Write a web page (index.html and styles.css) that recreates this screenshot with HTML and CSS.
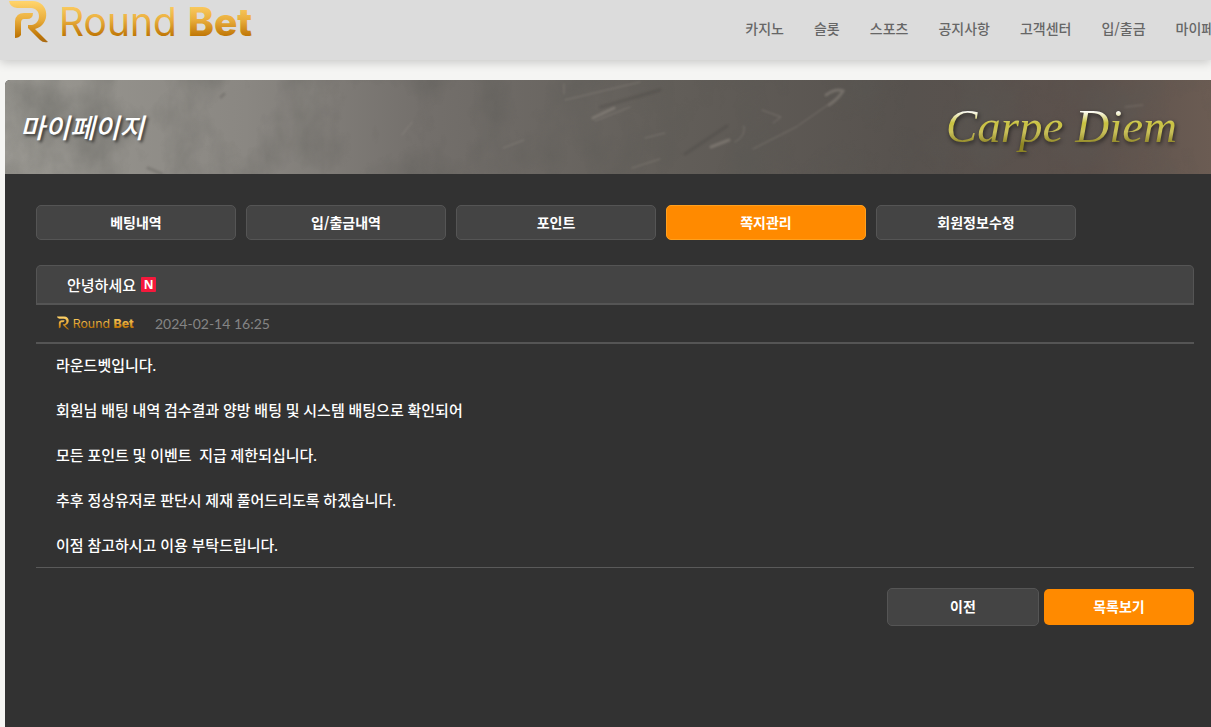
FILE: index.html
```html
<!DOCTYPE html>
<html lang="ko">
<head>
<meta charset="utf-8">
<title>Round Bet - 마이페이지</title>
<link rel="stylesheet" href="styles.css">
</head>
<body>
<svg class="defs" aria-hidden="true">
  <defs>
    <linearGradient id="gold" gradientUnits="userSpaceOnUse" x1="0" y1="2" x2="0" y2="42">
      <stop offset="0" stop-color="#ffd36a"/>
      <stop offset="0.45" stop-color="#e9ad3c"/>
      <stop offset="0.85" stop-color="#bf7606"/>
      <stop offset="1" stop-color="#a96a14"/>
    </linearGradient>
    <symbol id="logo" viewBox="0 0 250 46">
      <path fill="url(#gold)" d="M3 1 H26 C44 1 45 25 29 29 L42 42 Q37 43 34 40 L22 28 V25 H26 C36 23 35 8 25 8 H11 Q4 7 3 1 Z"/>
      <path fill="url(#gold)" d="M9 38 V21 Q10 13 18 13 H27 Q27 19 21 19 H18 Q15 19 15 23 V35 Q13 38 9 38 Z"/>
      <text class="logo-thin" x="53" y="36" fill="url(#gold)">Round</text>
      <text class="logo-bold" x="182" y="36" fill="url(#gold)">Bet</text>
    </symbol>
  </defs>
</svg>
<header class="header">
  <a class="brand" href="#" aria-label="Round Bet"><svg class="brand-logo"><use href="#logo"/></svg></a>
  <nav class="nav">
    <a href="#">카지노</a>
    <a href="#">슬롯</a>
    <a href="#">스포츠</a>
    <a href="#">공지사항</a>
    <a href="#">고객센터</a>
    <a href="#">입/출금</a>
    <a href="#">마이페이지</a>
  </nav>
</header>
<main class="page">
  <section class="banner">
    <svg class="banner-art" viewBox="0 0 1206 94" preserveAspectRatio="xMidYMid slice" aria-hidden="true">
      <defs>
        <linearGradient id="wall" x1="0" x2="1" y1="0" y2="0">
          <stop offset="0" stop-color="#9a9892"/>
          <stop offset="0.2" stop-color="#8a8782"/>
          <stop offset="0.35" stop-color="#736f6b"/>
          <stop offset="0.55" stop-color="#625e59"/>
          <stop offset="0.75" stop-color="#57524e"/>
          <stop offset="0.9" stop-color="#5c514c"/>
          <stop offset="1" stop-color="#6b5c53"/>
        </linearGradient>
        <filter id="grain" x="0" y="0" width="100%" height="100%">
          <feTurbulence type="fractalNoise" baseFrequency="0.018 0.012" numOctaves="5" seed="8"/>
          <feColorMatrix values="0 0 0 0 0.1  0 0 0 0 0.1  0 0 0 0 0.09  1.8 0 0 0 -0.75"/>
        </filter>
        <filter id="soft" x="-20%" y="-50%" width="140%" height="200%"><feGaussianBlur stdDeviation="1"/></filter>
      </defs>
      <rect width="1206" height="94" fill="url(#wall)"/>
      <rect width="1206" height="94" filter="url(#grain)" opacity="0.5"/>
      <g fill="none" stroke="#b3aaa0" stroke-linecap="round" filter="url(#soft)" opacity="0.3">
        <path stroke-width="3" d="M588 38 L609 28 M706 67 L724 60 M821 15 Q831 8 838 11 Q834 18 824 25"/>
        <path stroke-width="1" d="M498 68 L519 60 M560 20 L635 2 M590 41 L625 27 M640 58 L660 53 M627 88 L655 79 M730 62 Q741 56 739 46 M757 30 L776 37 L768 43 M748 69 L793 46 M559 4 V14 M397 55 L407 42 M794 45 L827 22 M1120 27 L1138 25"/>
      </g>
      <g fill="none" stroke="#3b3834" stroke-linecap="round" filter="url(#soft)" opacity="0.2">
        <path stroke-width="3" d="M596 27 L655 10 M680 74 L722 46 M143 88 L157 94 M216 17 L219 14"/>
      </g>
    </svg>
    <h1 class="banner-title">마이페이지</h1>
    <p class="banner-motto">Carpe Diem</p>
  </section>
  <div class="content">
    <nav class="tabs">
      <a class="tab" href="#">베팅내역</a>
      <a class="tab" href="#">입/출금내역</a>
      <a class="tab" href="#">포인트</a>
      <a class="tab tab-active" href="#" aria-current="page">쪽지관리</a>
      <a class="tab" href="#">회원정보수정</a>
    </nav>
    <article class="message">
      <h2 class="message-title">안녕하세요 <span class="badge">N</span></h2>
      <div class="message-meta">
        <svg class="meta-logo" role="img" aria-label="Round Bet"><use href="#logo"/></svg>
        <time datetime="2024-02-14T16:25">2024-02-14 16:25</time>
      </div>
      <div class="message-body">
        <p>라운드벳입니다.</p>
        <p>회원님 배팅 내역 검수결과 양방 배팅 및 시스템 배팅으로 확인되어</p>
        <p>모든 포인트 및 이벤트&nbsp; 지급 제한되십니다.</p>
        <p>추후 정상유저로 판단시 제재 풀어드리도록 하겠습니다.</p>
        <p>이점 참고하시고 이용 부탁드립니다.</p>
      </div>
    </article>
    <div class="actions">
      <button class="button button-prev" type="button">이전</button>
      <button class="button button-list" type="button">목록보기</button>
    </div>
  </div>
</main>
</body>
</html>
```
FILE: styles.css
```css
* {
  box-sizing: border-box;
}

body {
  margin: 0;
  min-height: 100vh;
  display: flex;
  flex-direction: column;
  overflow-x: hidden;
  background: #f5f5f3;
  font-family: "Noto Sans CJK KR", sans-serif;
  font-size: 14px;
}

a {
  color: inherit;
  text-decoration: none;
}

h1, h2, p {
  margin: 0;
}

.defs {
  position: absolute;
  width: 0;
  height: 0;
}

.header {
  display: flex;
  justify-content: space-between;
  height: 60px;
  padding-left: 6px;
  overflow: hidden;
  background: #dcdcdc;
  box-shadow: 0 2px 10px rgba(0, 0, 0, 0.2);
}

.brand-logo {
  display: block;
  width: 250px;
  height: 46px;
}

.logo-thin,
.logo-bold {
  font-family: Inter, sans-serif;
  font-size: 39px;
  font-weight: 400;
}

.logo-bold {
  font-weight: 800;
}

.nav {
  display: flex;
  gap: 30px;
  margin-right: -29px;
  color: #666;
  font-weight: 500;
  line-height: 56px;
  white-space: nowrap;
}

.page {
  flex: 1;
  margin: 20px 0 0 5px;
  border-top-left-radius: 5px;
  overflow: hidden;
  background: #323232;
}

.banner {
  position: relative;
  display: flex;
  align-items: center;
  justify-content: space-between;
  height: 94px;
  padding: 0 30px 2px 15px;
}

.banner-art {
  position: absolute;
  inset: 0;
  width: 100%;
  height: 100%;
}

.banner-title {
  position: relative;
  color: #fff;
  font-size: 27px;
  font-style: italic;
  font-weight: 500;
  text-shadow: 2px 2px 3px rgba(0, 0, 0, 0.6);
}

.banner-motto {
  position: relative;
  padding-right: 4px;
  background: linear-gradient(#fff 25%, #c9c23f 45%, #c9c05a 60%, #8d8424 80%);
  background-clip: text;
  color: transparent;
  font-family: "Liberation Serif", serif;
  font-size: 47px;
  font-style: italic;
  line-height: 60px;
  filter: drop-shadow(1px 2px 2px rgba(0, 0, 0, 0.6));
}

.content {
  padding: 31px 17px 31px 31px;
}

.tabs {
  display: flex;
  gap: 10px;
  margin-bottom: 25px;
}

.tab {
  width: 200px;
  height: 35px;
  border: 1px solid #555;
  border-radius: 5px;
  background: #444;
  color: #fff;
  font-weight: 700;
  line-height: 32px;
  text-align: center;
}

.tab-active {
  border-color: #ffa01e;
  background: #ff8a00;
}

.message {
  border-bottom: 1px solid #5a5a5a;
}

.message-title {
  display: flex;
  align-items: center;
  gap: 5px;
  height: 40px;
  padding: 0 30px 1px;
  border: 1px solid #555;
  border-bottom-width: 2px;
  border-radius: 5px 5px 0 0;
  background: #444;
  color: #fff;
  font-size: 15px;
  font-weight: 500;
}

.badge {
  width: 15px;
  height: 15px;
  border-radius: 1px;
  background: #f5193c;
  font-family: "Open Sans", sans-serif;
  font-size: 12px;
  font-weight: 700;
  line-height: 15px;
  text-align: center;
}

.message-meta {
  display: flex;
  align-items: center;
  gap: 20px;
  height: 39px;
  padding-left: 20px;
  border-bottom: 2px solid #555;
  color: #858585;
  font-family: Lato, sans-serif;
  font-size: 14px;
}

.meta-logo {
  width: 79px;
  height: 15px;
}

.message-body {
  display: grid;
  gap: 15px;
  padding: 6px 20px 7px;
  color: #fff;
  font-family: Lato, "Noto Sans CJK KR", sans-serif;
  font-size: 15px;
  font-weight: 500;
  line-height: 30px;
}

.actions {
  display: flex;
  align-items: center;
  justify-content: flex-end;
  gap: 5px;
  margin-top: 20px;
}

.button {
  width: 150px;
  height: 36px;
  padding: 0 0 2px;
  border: 0;
  border-radius: 5px;
  background: #ff8a00;
  color: #fff;
  font-family: inherit;
  font-size: 14px;
  font-weight: 700;
}

.button-prev {
  width: 152px;
  height: 38px;
  border: 1px solid #555;
  background: #444;
}
```
